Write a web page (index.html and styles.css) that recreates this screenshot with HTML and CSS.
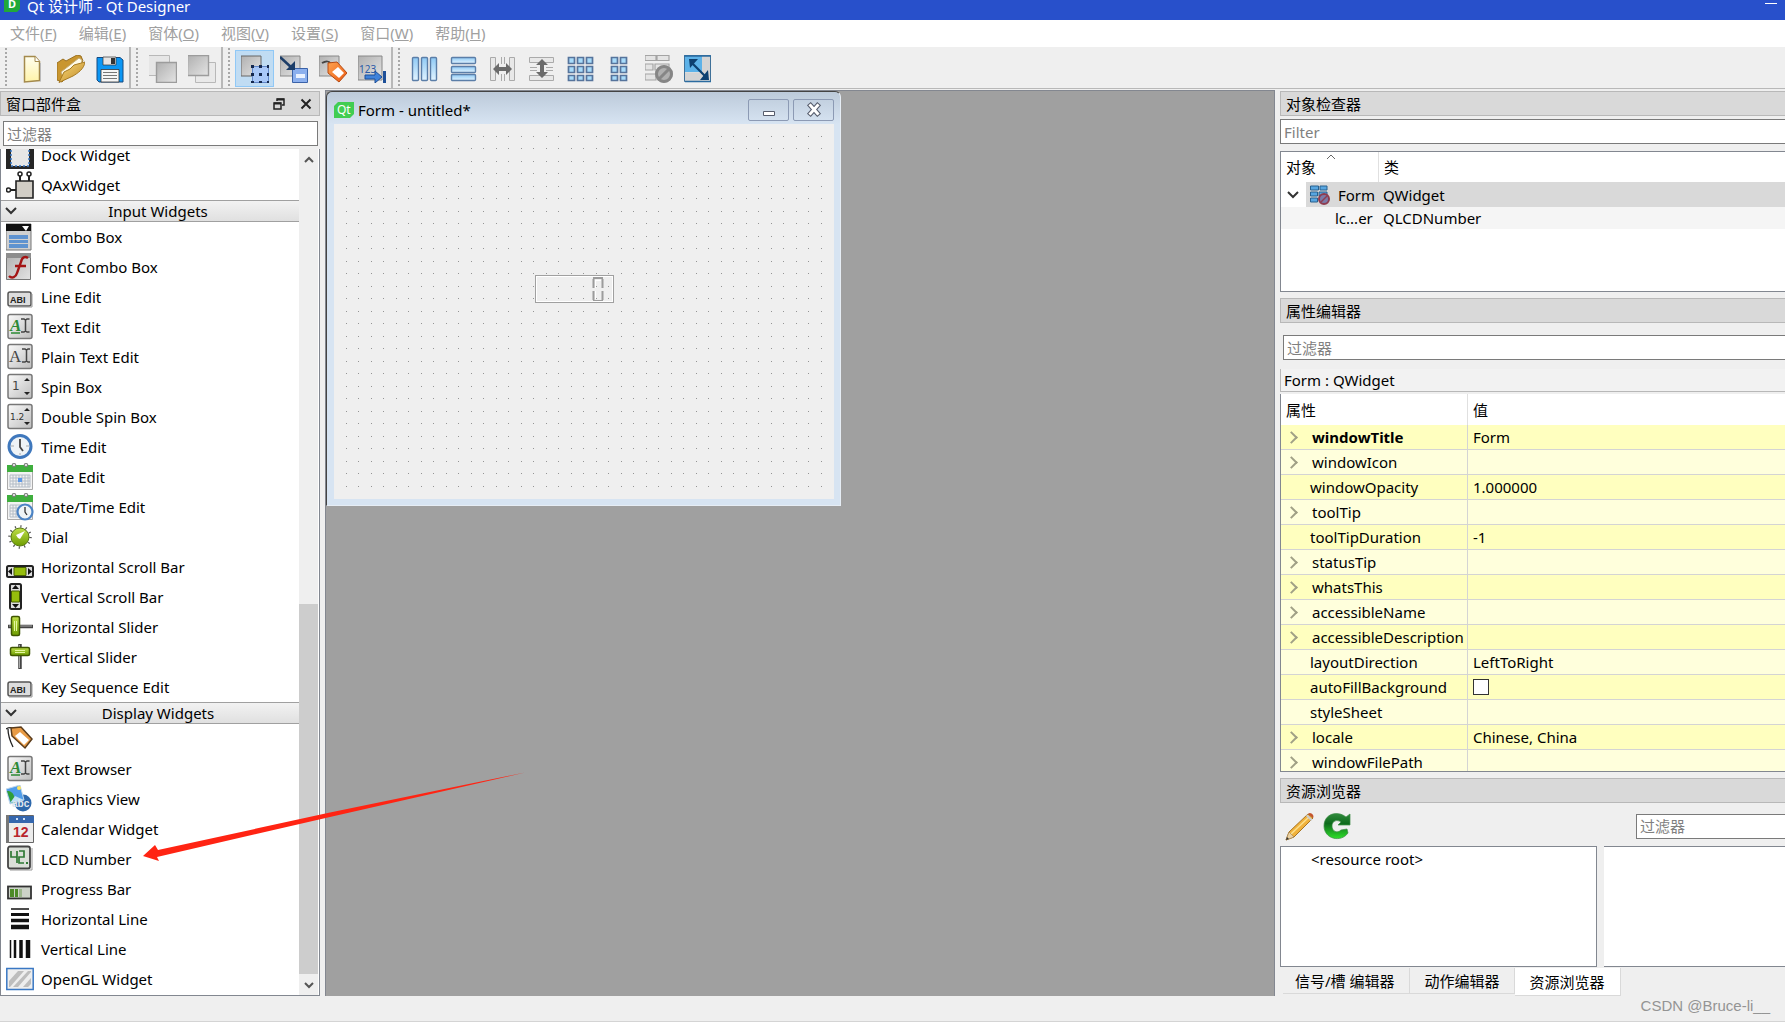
FILE: index.html
```html
<!DOCTYPE html>
<html lang="zh-CN">
<head>
<meta charset="utf-8">
<title>Qt 设计师 - Qt Designer</title>
<link rel="stylesheet" href="styles.css">
</head>
<body>
<svg class="defs" aria-hidden="true">
  <defs>
    <linearGradient id="g-grey" x1="0" y1="0" x2="1" y2="1"><stop offset="0" stop-color="#fafafa"/><stop offset="1" stop-color="#bdbdbd"/></linearGradient>
    <linearGradient id="g-dark" x1="0" y1="0" x2="1" y2="1"><stop offset="0" stop-color="#b0b0b0"/><stop offset="1" stop-color="#e4e4e4"/></linearGradient>
    <linearGradient id="g-blue" x1="0" y1="0" x2="0" y2="1"><stop offset="0" stop-color="#8fcaf5"/><stop offset="1" stop-color="#e2f4ff"/></linearGradient>
    <linearGradient id="g-folder" x1="0" y1="0" x2="1" y2="1"><stop offset="0" stop-color="#f8d878"/><stop offset="1" stop-color="#c08a28"/></linearGradient>
    <linearGradient id="g-page" x1="0" y1="0" x2="0" y2="1"><stop offset="0" stop-color="#fffef0"/><stop offset="1" stop-color="#fff3a8"/></linearGradient>
    <linearGradient id="g-green" x1="0" y1="0" x2="0" y2="1"><stop offset="0" stop-color="#2f8a3c"/><stop offset=".4" stop-color="#0e6b1c"/><stop offset="1" stop-color="#2ee02a"/></linearGradient>
    <linearGradient id="g-lime" x1="0" y1="0" x2="0" y2="1"><stop offset="0" stop-color="#c0e04a"/><stop offset="1" stop-color="#6d9c00"/></linearGradient>
    <linearGradient id="g-orange" x1="0" y1="0" x2="1" y2="1"><stop offset="0" stop-color="#ffa24e"/><stop offset="1" stop-color="#ea5a14"/></linearGradient>
    <pattern id="grid-dots" width="25" height="25" patternUnits="userSpaceOnUse"><path d="M12 12h1v1h-1zM24 12h1v1h-1zM12 24h1v1h-1zM24 24h1v1h-1z" fill="#949494"/></pattern>

    <symbol id="i-new" viewBox="0 0 28 28"><path d="M6.500 1.500H17L21.500 6.500V25.500L6.500 27z" fill="url(#g-page)" stroke="#a48a4c" stroke-width="1.500"/><path d="M17 1.500V6.500H21.500" fill="#fff" stroke="#a48a4c"/><path d="M22.500 8V26.500" stroke="#b9b9b9"/></symbol>
    <symbol id="i-open" viewBox="0 0 28 28"><path d="M0 8L6 4 9 6 20 0 24 1 26 6 5 27 0 25z" fill="#c9962f" stroke="#9a7020"/><path d="M4 17L22 3 25 5 24 12 6 22z" fill="#fffbe9" stroke="#c4ac74"/><path d="M2 27.500L7 17 13 14 17 10 28 7C27 14 21 18 16 21z" fill="url(#g-folder)" stroke="#a67a22"/></symbol>
    <symbol id="i-save" viewBox="0 0 28 28"><path d="M1 2.500H24L27 5V27H3L1 25z" fill="#0a96f4" stroke="#174a80"/><path d="M7 2h13v8H7z" fill="#e4e4e4" stroke="#333" stroke-width=".7"/><path d="M15 3h4v6h-4z" fill="#333"/><path d="M5 14.500h18V27H5z" fill="#f6f6f6" stroke="#333" stroke-width=".8"/><path d="M7 17.500h14M7 20.500h14M7 23.500h14" stroke="#777" stroke-width="1.200"/></symbol>
    <symbol id="i-front" viewBox="0 0 28 28"><path d="M-.5.500h21v20h-21z" fill="#e6e6e6" stroke="#b8b8b8"/><path d="M7.500 7.500h20v20h-20z" fill="url(#g-dark)" stroke="#9c9c9c" stroke-width="1.400"/></symbol>
    <symbol id="i-back" viewBox="0 0 28 28"><path d="M7.500 7.500h20v20h-20z" fill="#e9e9e9" stroke="#b8b8b8"/><path d="M-.5.500h21v20h-21z" fill="url(#g-dark)" stroke="#9c9c9c" stroke-width="1.400"/></symbol>
    <symbol id="i-widgets" viewBox="0 0 28 28"><path d="M0 1h20v20H0z" fill="url(#g-dark)" stroke="#666"/><path d="M11.500 11.500h16v16h-16z" fill="#a9c8f8" stroke="#6287c9"/><path d="M10 10h3v3h-3zM18 10h3v3h-3zM26 10h3v3h-3zM10 18h3v3h-3zM18 18h3v3h-3zM26 18h3v3h-3zM10 26h3v3h-3zM18 26h3v3h-3zM26 26h3v3h-3z" fill="#14284e"/></symbol>
    <symbol id="i-signals" viewBox="0 0 28 28"><path d="M0 1h20v20H0z" fill="url(#g-dark)" stroke="#888"/><path d="M12.500 13.500h15v14h-15z" fill="#8cb0ee" stroke="#3a62a8"/><path d="M16 19h9v4h-9z" fill="#eaf2ff"/><path d="M0 2L12 13" stroke="#1c3d68" stroke-width="2.500"/><path d="M15 6V15H6z" fill="#1c3d68"/></symbol>
    <symbol id="i-buddy" viewBox="0 0 28 28"><path d="M0 1h20v20H0z" fill="url(#g-dark)" stroke="#888"/><path d="M3 8C8 5 10 6 12 9" stroke="#444" stroke-width="2" fill="none"/><path d="M9 8L18 7 28 18 20 27 9 18z" fill="url(#g-orange)" stroke="#b64a12"/><path d="M19 12L25 18 20 23 13 17z" fill="#fff"/></symbol>
    <symbol id="i-tab" viewBox="0 0 28 28"><path d="M0 1h24v24H0z" fill="url(#g-dark)" stroke="#888"/><text x="1" y="18" class="tiny-num">123</text><path d="M7 20h10v-4l7 6-7 6v-4H7z" fill="#3f82da" stroke="#1d4f98"/><path d="M26.500 16v12" stroke="#1d4f98" stroke-width="3"/></symbol>
    <symbol id="i-hlay" viewBox="0 0 28 28"><g fill="url(#g-blue)" stroke="#5b7ea8" stroke-width="1.400"><rect x="1.500" y="2.500" width="6" height="23" rx="1"/><rect x="10.500" y="2.500" width="6" height="23" rx="1"/><rect x="19.500" y="2.500" width="6" height="23" rx="1"/></g></symbol>
    <symbol id="i-vlay" viewBox="0 0 28 28"><g fill="url(#g-blue)" stroke="#5b7ea8" stroke-width="1.400"><rect x="1.500" y="2.500" width="24" height="6" rx="1"/><rect x="1.500" y="11.500" width="24" height="6" rx="1"/><rect x="1.500" y="19.500" width="24" height="6" rx="1"/></g></symbol>
    <symbol id="i-hsplit" viewBox="0 0 28 28"><g fill="#e8e8e8" stroke="#aaa"><path d="M1.500 2.500h5v23h-5zM20.500 2.500h5v23h-5zM12.500 2v7M15.500 2v7M12.500 19v7M15.500 19v7"/></g><path d="M4 14l6-6v4h7V8l6 6-6 6v-4h-7v4z" fill="#6b6b6b"/></symbol>
    <symbol id="i-vsplit" viewBox="0 0 28 28"><g fill="#e8e8e8" stroke="#aaa"><path d="M1.500 2.500h24v5h-24zM1.500 20.500h24v5h-24zM2 12.500h7M2 15.500h7M18 12.500h7M18 15.500h7"/></g><path d="M14 4l6 6h-4v7h4l-6 6-6-6h4v-7H8z" fill="#6b6b6b"/></symbol>
    <symbol id="i-grid" viewBox="0 0 28 28"><g fill="#a8dbfa" stroke="#56749c" stroke-width="1.700"><path d="M1.500 2.500h6v6h-6zM10.500 2.500h6v6h-6zM19.500 2.500h6v6h-6zM1.500 11.500h6v6h-6zM10.500 11.500h6v6h-6zM19.500 11.500h6v6h-6zM1.500 20.500h6v5h-6zM10.500 20.500h6v5h-6zM19.500 20.500h6v5h-6z"/></g></symbol>
    <symbol id="i-form" viewBox="0 0 28 28"><g fill="#a8dbfa" stroke="#56749c" stroke-width="1.700"><path d="M5.500 2.500h6v6h-6zM14.500 2.500h6v6h-6zM5.500 11.500h6v6h-6zM14.500 11.500h6v6h-6zM5.500 20.500h6v5h-6zM14.500 20.500h6v5h-6z"/></g></symbol>
    <symbol id="i-break" viewBox="0 0 28 28"><g fill="#e4e4e4" stroke="#a4a4a4" stroke-width="1.200"><path d="M0 .5h11v5H0zM12 .5h12v5H12zM0 9h8v6H0zM10 9h14v6H10zM0 19h11v6H0z"/></g><circle cx="19" cy="19" r="9" fill="#b0b0b0"/><circle cx="19" cy="19" r="7.500" fill="none" stroke="#868686" stroke-width="3"/><path d="M14 24L24 14" stroke="#868686" stroke-width="3"/></symbol>
    <symbol id="i-adjust" viewBox="0 0 28 28"><path d="M.5.500h26v26H.5z" fill="#dcdcdc" stroke="#3f7199"/><path d="M1 1h17v16H1z" fill="#5db2e8"/><path d="M18 1h8v20h-8zM1 18h17v8H1z" fill="#d4d4d4"/><path d="M8 8L21 21" stroke="#0d4070" stroke-width="2.200"/><path d="M5 4h9l-8 9zM25 25h-9l8-10z" fill="#0d4070"/><path d="M0 1h27M1 26.500h26" stroke="#2b6ba0" stroke-width="1.500"/></symbol>

    <symbol id="w-dock" viewBox="0 0 28 28"><path d="M0 0h28v28H0z" fill="#262626"/><path d="M5 3h18v22H5z" fill="#e6e6e6" stroke="#3a78c4" stroke-width="1.500" stroke-dasharray="2 2"/></symbol>
    <symbol id="w-ax" viewBox="0 0 28 28"><path d="M14 5v6M23 5v6M4 19h6" stroke="#222" stroke-width="2"/><g fill="#fff" stroke="#222" stroke-width="1.500"><circle cx="14" cy="3" r="2"/><circle cx="23" cy="3" r="2"/><circle cx="2.500" cy="19" r="2"/></g><path d="M10 10h17v17H10z" fill="#d1cdc5" stroke="#222" stroke-width="1.600"/></symbol>
    <symbol id="w-combo" viewBox="0 0 28 28"><path d="M0 1h25v26H0z" fill="#d0d0d0" stroke="#777"/><path d="M0 1h25v7H0z" fill="#111"/><path d="M16 3h7l-3 5z" fill="#fff"/><path d="M3 12h19v4H3zM3 17h19v3H3zM3 21h19v4H3z" fill="#5f93d0"/></symbol>
    <symbol id="w-font" viewBox="0 0 28 28"><path d="M.5.500h24v26H.5z" fill="url(#g-dark)" stroke="#777"/><path d="M0 0h25v5H0z" fill="#8d8d8d"/><path d="M22 5C19 3 16 4 15 9L11 20C10 24 6 26 3 23M9 13H20" fill="none" stroke="#a31515" stroke-width="2.400"/></symbol>
    <symbol id="w-line" viewBox="0 0 28 28"><rect x="2" y="9" width="23" height="14" rx="2" fill="#ddd" stroke="#555" stroke-width="1.500"/><path d="M3 24h23V11" fill="none" stroke="#999"/><text x="4" y="20" class="tiny-abi">ABI</text></symbol>
    <symbol id="w-text" viewBox="0 0 28 28"><rect x="2" y="1.500" width="24" height="24" rx="2" fill="url(#g-grey)" stroke="#777" stroke-width="1.500"/><text x="4" y="18" class="rich-a">A</text><path d="M5 20h9" stroke="#2d8a35" stroke-width="1.500"/><path d="M15 6h3l1.500 1L21 6h2.500M15 19h3l1.500-1 1.500 1h2.500M19.500 7v11" fill="none" stroke="#444" stroke-width="1.500"/></symbol>
    <symbol id="w-plain" viewBox="0 0 28 28"><rect x="2" y="1.500" width="24" height="24" rx="2" fill="url(#g-grey)" stroke="#777" stroke-width="1.500"/><text x="3" y="19" class="plain-a">A</text><path d="M16 6h3l1.500 1L22 6h2M16 19h3l1.500-1 1.500 1h2M20.500 7v11" fill="none" stroke="#444" stroke-width="1.500"/></symbol>
    <symbol id="w-spin" viewBox="0 0 28 28"><rect x="2" y="1.500" width="24" height="24" rx="2" fill="url(#g-grey)" stroke="#777" stroke-width="1.500"/><text x="6" y="17" class="spin-num">1</text><path d="M18 8l3-3 3 3zM18 19l3 3 3-3z" fill="#222"/></symbol>
    <symbol id="w-dspin" viewBox="0 0 28 28"><rect x="2" y="1.500" width="24" height="24" rx="2" fill="url(#g-grey)" stroke="#777" stroke-width="1.500"/><text x="4" y="17" class="dspin-num">1.2</text><path d="M18 8l3-3 3 3zM18 19l3 3 3-3z" fill="#222"/></symbol>
    <symbol id="w-time" viewBox="0 0 28 28"><circle cx="14" cy="13.500" r="11" fill="#eef3f6" stroke="#3f78bd" stroke-width="3"/><path d="M14 6v8l3 4" fill="none" stroke="#444" stroke-width="1.800"/><path d="M5 13h3M20 13h3M14 20v2" stroke="#aaa"/></symbol>
    <symbol id="w-date" viewBox="0 0 28 28"><path d="M1.500 2.500h25v24h-25z" fill="#f3f3f3" stroke="#aaa"/><path d="M1 2h26v7H1z" fill="#3fae3d"/><path d="M4 12h20v12H4zM4 15h20M4 18h20M4 21h20M7 12v12M10 12v12M13 12v12M16 12v12M19 12v12M22 12v12" fill="none" stroke="#b3bcc6"/><path d="M12 15h4v4h-4z" fill="#5b97e8"/><circle cx="8" cy="2" r="1.800" fill="#ddd" stroke="#777"/><circle cx="20" cy="2" r="1.800" fill="#ddd" stroke="#777"/></symbol>
    <symbol id="w-datetime" viewBox="0 0 28 28"><path d="M1.500 2.500h25v24h-25z" fill="#f3f3f3" stroke="#aaa"/><path d="M1 2h26v7H1z" fill="#3fae3d"/><path d="M4 12h20M4 15h20M4 18h20M4 21h20M4 24h20M4 12v12M7 12v12M10 12v12" fill="none" stroke="#b3bcc6"/><circle cx="8" cy="2" r="1.800" fill="#ddd" stroke="#777"/><circle cx="20" cy="2" r="1.800" fill="#ddd" stroke="#777"/><circle cx="19" cy="19" r="7.500" fill="#eef3f6" stroke="#4b83c4" stroke-width="2.200"/><path d="M19 14v5l2 3" fill="none" stroke="#333" stroke-width="1.300"/></symbol>
    <symbol id="w-dial" viewBox="0 0 28 28"><circle cx="14" cy="14" r="10.500" fill="none" stroke="#555" stroke-width="2.500" stroke-dasharray="1.200 4.300"/><circle cx="14" cy="14" r="9" fill="url(#g-lime)" stroke="#587a10"/><path d="M19 8L10 12l2 3 2 1z" fill="#fff"/></symbol>
    <symbol id="w-hscroll" viewBox="0 0 28 28"><rect x="1" y="13" width="26" height="11" rx="1.500" fill="#ddd" stroke="#222" stroke-width="2"/><path d="M8 14.500h12v8H8z" fill="#96bd0c" stroke="#486000"/><path d="M6 15v7l-4-3.500zM22 15v7l4-3.500z" fill="#111"/></symbol>
    <symbol id="w-vscroll" viewBox="0 0 28 28"><rect x="4" y="1" width="11" height="25" rx="1.500" fill="#ddd" stroke="#222" stroke-width="2"/><path d="M5.500 8h8v11h-8z" fill="#96bd0c" stroke="#486000"/><path d="M6 6h7L9.500 2zM6 21h7l-3.500 4z" fill="#111"/></symbol>
    <symbol id="w-hslider" viewBox="0 0 28 28"><path d="M2 13.500h25" stroke="#444" stroke-width="3.500"/><path d="M3 13h23" stroke="#aaa"/><rect x="5.500" y="3.500" width="8" height="19" rx="1.500" fill="url(#g-lime)" stroke="#3f5600" stroke-width="1.500"/><path d="M8.500 8v10M10.500 8v10" stroke="#e5f7a0"/></symbol>
    <symbol id="w-vslider" viewBox="0 0 28 28"><path d="M14 1v25" stroke="#444" stroke-width="3.500"/><path d="M13.500 2v23" stroke="#aaa"/><rect x="4.500" y="4.500" width="19" height="8" rx="1.500" fill="url(#g-lime)" stroke="#3f5600" stroke-width="1.500"/><path d="M9 7.500h10M9 9.500h10" stroke="#e5f7a0"/></symbol>
    <symbol id="w-label" viewBox="0 0 28 28"><path d="M0 4C4 1 8 3 11 5M2 4C2 12 5 18 7 22" stroke="#222" stroke-width="1.300" fill="none"/><path d="M5 3L15 2 26 14 19 23 6 11z" fill="#e89b45" stroke="#5a3c1c" stroke-width="1.500"/><path d="M14 7L23 15 18 20 9 11z" fill="#fff"/></symbol>
    <symbol id="w-graphics" viewBox="0 0 28 28"><circle cx="17" cy="18" r="8.500" fill="#2d68ac"/><path d="M0 4L14 0 18 15 4 19z" fill="#4e9cea" stroke="#c4d8e8"/><path d="M1 6c4 0 6 2 7 5l2 6-5 1z" fill="#2f9e3a"/><path d="M4 18l5-7 9 4z" fill="#bde0f8"/><circle cx="13" cy="3" r="2" fill="#ffe35a"/><text x="6" y="22" class="gfx-abc">abc</text></symbol>
    <symbol id="w-calendar" viewBox="0 0 28 28"><path d="M.5.500h27v27H.5z" fill="#ececec" stroke="#666"/><path d="M0 0h3v28H0z" fill="#777"/><path d="M3 1h25v7H3z" fill="#3567ae"/><text x="7" y="22" class="cal-num">12</text><path d="M10 4h2M17 4h2" stroke="#cfe0f8" stroke-width="2"/></symbol>
    <symbol id="w-lcd" viewBox="0 0 28 28"><rect x="2" y="1.500" width="22" height="22" rx="2" fill="#dadfd8" stroke="#444" stroke-width="1.800"/><path d="M26 3v22H4" fill="none" stroke="#999"/><path d="M5 6v6h6M11 6v12M13 6h5v6h-5v6h5" fill="none" stroke="#2e7a34" stroke-width="1.700"/><path d="M20 17h2v2h-2z" fill="#2e7a34"/></symbol>
    <symbol id="w-progress" viewBox="0 0 28 28"><rect x="2" y="11.500" width="23" height="12" fill="#ccd2c8" stroke="#333" stroke-width="1.800"/><path d="M4 14h4v8H4zM9 14h3v8H9z" fill="#4d8a28"/><path d="M13 14h3v8h-3z" fill="#9cb78c"/></symbol>
    <symbol id="w-hline" viewBox="0 0 28 28"><path d="M5 4h18" stroke="#111" stroke-width="1.500"/><path d="M5 9.500h18" stroke="#111" stroke-width="3"/><path d="M5 15.500h18" stroke="#111" stroke-width="3.500"/><path d="M5 22h18" stroke="#111" stroke-width="4.500"/></symbol>
    <symbol id="w-vline" viewBox="0 0 28 28"><path d="M4.500 5v18" stroke="#111" stroke-width="1.500"/><path d="M9 5v18" stroke="#111" stroke-width="2.500"/><path d="M15 5v18" stroke="#111" stroke-width="3.500"/><path d="M22 5v18" stroke="#111" stroke-width="4.500"/></symbol>
    <symbol id="w-opengl" viewBox="0 0 28 28"><path d="M.8 3.500h26.400v21H.8z" fill="#eee" stroke="#3a78c4" stroke-width="1.500"/><path d="M3 16L12 6h6L4 22H3zM7 22L22 6h3v1L12 22zM17 22l8-9v6l-3 3z" fill="#bdbdbd"/></symbol>
    <symbol id="i-nolayout" viewBox="0 0 20 20"><path d="M.5 1h8v4h-8zM10 1h7v4h-7zM.5 7h7v4h-7zM9 7h8v4H9zM.5 13h7v4h-7z" fill="#58a6e0" stroke="#28608e"/><circle cx="14" cy="14" r="5" fill="#7a7aa8" stroke="#8e3c50" stroke-width="2"/><path d="M11 17l6-6" stroke="#8e3c50" stroke-width="1.500"/></symbol>
  </defs>
</svg>

<header class="titlebar">
  <svg class="app-logo" viewBox="0 0 16 16"><path d="M3 0h13v13l-3 3H0V3z" fill="#21a838"/><text x="4" y="12" class="logo-d">D</text></svg>
  <h1 class="app-title">Qt 设计师 - Qt Designer</h1>
  <button class="window-min" aria-label="Minimize"></button>
</header>

<nav class="menubar">
  <button>文件(<u>F</u>)</button>
  <button>编辑(<u>E</u>)</button>
  <button>窗体(<u>O</u>)</button>
  <button>视图(<u>V</u>)</button>
  <button>设置(<u>S</u>)</button>
  <button>窗口(<u>W</u>)</button>
  <button>帮助(<u>H</u>)</button>
</nav>

<div class="toolbar">
  <div class="tool-group">
    <button aria-label="New"><svg><use href="#i-new"/></svg></button>
    <button aria-label="Open"><svg><use href="#i-open"/></svg></button>
    <button aria-label="Save"><svg><use href="#i-save"/></svg></button>
  </div>
  <div class="tool-group">
    <button aria-label="Bring to front"><svg><use href="#i-front"/></svg></button>
    <button aria-label="Send to back"><svg><use href="#i-back"/></svg></button>
  </div>
  <div class="tool-group">
    <button class="active" aria-label="Edit widgets"><svg><use href="#i-widgets"/></svg></button>
    <button aria-label="Edit signals"><svg><use href="#i-signals"/></svg></button>
    <button aria-label="Edit buddies"><svg><use href="#i-buddy"/></svg></button>
    <button aria-label="Edit tab order"><svg><use href="#i-tab"/></svg></button>
  </div>
  <div class="tool-group">
    <button aria-label="Lay out horizontally"><svg><use href="#i-hlay"/></svg></button>
    <button aria-label="Lay out vertically"><svg><use href="#i-vlay"/></svg></button>
    <button aria-label="Horizontal splitter"><svg><use href="#i-hsplit"/></svg></button>
    <button aria-label="Vertical splitter"><svg><use href="#i-vsplit"/></svg></button>
    <button aria-label="Grid layout"><svg><use href="#i-grid"/></svg></button>
    <button aria-label="Form layout"><svg><use href="#i-form"/></svg></button>
    <button aria-label="Break layout"><svg><use href="#i-break"/></svg></button>
    <button aria-label="Adjust size"><svg><use href="#i-adjust"/></svg></button>
  </div>
</div>

<main class="workspace">
  <section class="dock widget-box">
    <h2 class="dock-title">窗口部件盒
      <span class="dock-buttons">
        <button aria-label="Float"><svg viewBox="0 0 12 12"><path d="M4 3V1h7v6H9" fill="none" stroke="#222" stroke-width="1.500"/><path d="M4 1.500h7" stroke="#222" stroke-width="2"/><path d="M1 5h7v6H1z" fill="none" stroke="#222" stroke-width="1.500"/><path d="M1 5.500h7" stroke="#222" stroke-width="2"/></svg></button>
        <button aria-label="Close"><svg viewBox="0 0 12 12"><path d="M1.500 1.500l9 9M10.500 1.500l-9 9" stroke="#222" stroke-width="2"/></svg></button>
      </span>
    </h2>
    <input class="field box-filter" type="text" placeholder="过滤器" aria-label="过滤器">
    <div class="widget-frame">
      <ul class="widget-list">
        <li class="widget"><svg><use href="#w-dock"/></svg>Dock Widget</li>
        <li class="widget"><svg><use href="#w-ax"/></svg>QAxWidget</li>
        <li class="category"><svg viewBox="0 0 12 12"><path d="M1 3l5 5 5-5" fill="none" stroke="#333" stroke-width="2"/></svg><span>Input Widgets</span></li>
        <li class="widget"><svg><use href="#w-combo"/></svg>Combo Box</li>
        <li class="widget"><svg><use href="#w-font"/></svg>Font Combo Box</li>
        <li class="widget"><svg><use href="#w-line"/></svg>Line Edit</li>
        <li class="widget"><svg><use href="#w-text"/></svg>Text Edit</li>
        <li class="widget"><svg><use href="#w-plain"/></svg>Plain Text Edit</li>
        <li class="widget"><svg><use href="#w-spin"/></svg>Spin Box</li>
        <li class="widget"><svg><use href="#w-dspin"/></svg>Double Spin Box</li>
        <li class="widget"><svg><use href="#w-time"/></svg>Time Edit</li>
        <li class="widget"><svg><use href="#w-date"/></svg>Date Edit</li>
        <li class="widget"><svg><use href="#w-datetime"/></svg>Date/Time Edit</li>
        <li class="widget"><svg><use href="#w-dial"/></svg>Dial</li>
        <li class="widget"><svg><use href="#w-hscroll"/></svg>Horizontal Scroll Bar</li>
        <li class="widget"><svg><use href="#w-vscroll"/></svg>Vertical Scroll Bar</li>
        <li class="widget"><svg><use href="#w-hslider"/></svg>Horizontal Slider</li>
        <li class="widget"><svg><use href="#w-vslider"/></svg>Vertical Slider</li>
        <li class="widget"><svg><use href="#w-line"/></svg>Key Sequence Edit</li>
        <li class="category"><svg viewBox="0 0 12 12"><path d="M1 3l5 5 5-5" fill="none" stroke="#333" stroke-width="2"/></svg><span>Display Widgets</span></li>
        <li class="widget"><svg><use href="#w-label"/></svg>Label</li>
        <li class="widget"><svg><use href="#w-text"/></svg>Text Browser</li>
        <li class="widget"><svg><use href="#w-graphics"/></svg>Graphics View</li>
        <li class="widget"><svg><use href="#w-calendar"/></svg>Calendar Widget</li>
        <li class="widget"><svg><use href="#w-lcd"/></svg>LCD Number</li>
        <li class="widget"><svg><use href="#w-progress"/></svg>Progress Bar</li>
        <li class="widget"><svg><use href="#w-hline"/></svg>Horizontal Line</li>
        <li class="widget"><svg><use href="#w-vline"/></svg>Vertical Line</li>
        <li class="widget"><svg><use href="#w-opengl"/></svg>OpenGL Widget</li>
      </ul>
      <div class="scrollbar">
        <button aria-label="Scroll up"><svg viewBox="0 0 12 12"><path d="M2 8l4-4 4 4" fill="none" stroke="#555" stroke-width="2"/></svg></button>
        <div class="track"><div class="thumb"></div></div>
        <button aria-label="Scroll down"><svg viewBox="0 0 12 12"><path d="M2 4l4 4 4-4" fill="none" stroke="#555" stroke-width="2"/></svg></button>
      </div>
    </div>
  </section>

  <section class="canvas">
    <div class="form-window">
      <div class="form-title">
        <svg class="qt-logo" viewBox="0 0 20 16"><path d="M4 0h16v12l-4 4H0V4z" fill="#41cd52"/><text x="3" y="12" class="logo-qt">Qt</text></svg>
        <span class="form-name">Form - untitled*</span>
        <button aria-label="Minimize form"><svg viewBox="0 0 16 16"><path d="M2.500 9.500h11v4h-11z" fill="#fff" stroke="#555b6b"/></svg></button>
        <button aria-label="Close form"><svg viewBox="0 0 16 16"><path d="M4.500 3.500l7 8M11.500 3.500l-7 8" stroke="#555b6b" stroke-width="5" stroke-linecap="square"/><path d="M4.500 3.500l7 8M11.500 3.500l-7 8" stroke="#fff" stroke-width="3" stroke-linecap="square"/></svg></button>
      </div>
      <div class="form-body">
        <svg class="dots"><rect width="498" height="373" fill="url(#grid-dots)"/></svg>
        <div class="lcd"><svg viewBox="0 0 12 25"><path d="M1 1h10M1 24h10M1.500 2v9M10.500 2v9M1.500 14v9M10.500 14v9" stroke="#9c9c9c" stroke-width="2"/><path d="M3 3.500h6M3.500 3v8M3.500 14v8" stroke="#fff" fill="none"/></svg></div>
      </div>
    </div>
  </section>

  <aside class="side">
    <section class="dock">
      <h2 class="dock-title">对象检查器</h2>
      <input class="field object-filter" type="text" placeholder="Filter" aria-label="Filter">
      <div class="tree">
        <table>
          <thead><tr><th class="sorted">对象<svg viewBox="0 0 10 6"><path d="M1 5l4-4 4 4" fill="none" stroke="#666"/></svg></th><th>类</th></tr></thead>
          <tbody>
            <tr class="selected"><td><div class="node"><svg class="chevron" viewBox="0 0 12 12"><path d="M1 3l5 5 5-5" fill="none" stroke="#333" stroke-width="2"/></svg><span class="node-name"><svg class="node-icon"><use href="#i-nolayout"/></svg>Form</span></div></td><td>QWidget</td></tr>
            <tr class="child"><td>lc...er</td><td>QLCDNumber</td></tr>
          </tbody>
        </table>
      </div>
    </section>

    <section class="dock properties">
      <h2 class="dock-title">属性编辑器</h2>
      <input class="field property-filter" type="text" placeholder="过滤器" aria-label="过滤器">
      <p class="current-object">Form : QWidget</p>
      <div class="property-frame">
        <table>
          <thead><tr><th>属性</th><th>值</th></tr></thead>
          <tbody>
            <tr class="more changed"><td>windowTitle</td><td>Form</td></tr>
            <tr class="more"><td>windowIcon</td><td></td></tr>
            <tr><td>windowOpacity</td><td>1.000000</td></tr>
            <tr class="more"><td>toolTip</td><td></td></tr>
            <tr><td>toolTipDuration</td><td>-1</td></tr>
            <tr class="more"><td>statusTip</td><td></td></tr>
            <tr class="more"><td>whatsThis</td><td></td></tr>
            <tr class="more"><td>accessibleName</td><td></td></tr>
            <tr class="more"><td>accessibleDescription</td><td></td></tr>
            <tr><td>layoutDirection</td><td>LeftToRight</td></tr>
            <tr><td><label for="autofill">autoFillBackground</label></td><td><input id="autofill" type="checkbox"></td></tr>
            <tr><td>styleSheet</td><td></td></tr>
            <tr class="more"><td>locale</td><td>Chinese, China</td></tr>
            <tr class="more"><td>windowFilePath</td><td></td></tr>
          </tbody>
        </table>
      </div>
    </section>

    <section class="dock">
      <h2 class="dock-title">资源浏览器</h2>
      <div class="resource-tools">
        <button aria-label="Edit resources"><svg viewBox="0 0 28 28"><path d="M0 28L3 20 22 2 27 6 8 25z" fill="#f0b23c" stroke="#a87420"/><path d="M5 22L23 5" stroke="#fbe08e" stroke-width="1.500"/><path d="M0 28L3 20 8 25z" fill="#ead2a4" stroke="#a08050" stroke-width=".6"/><path d="M0 28l1-3 2 2z" fill="#333"/><path d="M20 4l5 5 1.500-1.500-5-5z" fill="#ccc"/><path d="M22 2C24-1 29 3 27 6z" fill="#c4552d"/></svg></button>
        <button aria-label="Reload"><svg viewBox="0 0 28 28"><path d="M27 13V2l-4 3C14-2 1 2 1 14c0 13 17 17 24 7l-1-4-6 1c-4 4-9 1-9-4 0-5 5-7 9-4l-3 3z" fill="url(#g-green)" stroke="#3c8b45" stroke-width=".7"/></svg></button>
        <input class="field resource-filter" type="text" placeholder="过滤器" aria-label="过滤器">
      </div>
      <div class="resource-panes">
        <div class="pane root-pane">&lt;resource root&gt;</div>
        <div class="pane"></div>
      </div>
      <div class="tabs" role="tablist">
        <button role="tab">信号/槽 编辑器</button>
        <button role="tab">动作编辑器</button>
        <button role="tab" class="current" aria-selected="true">资源浏览器</button>
      </div>
    </section>
  </aside>
</main>

<footer class="statusbar"><span>CSDN @Bruce-li__</span></footer>

<svg class="annotation" viewBox="0 0 384 90" aria-hidden="true"><path d="M0 84L12 73 15 78 187 40.500 382 .5 187 45 14 85 16 89z" fill="#ff2413"/></svg>
</body>
</html>
```

FILE: styles.css
```css
* {
  box-sizing: border-box;
}

body {
  margin: 0;
  height: 100vh;
  display: flex;
  flex-direction: column;
  position: relative;
  overflow: hidden;
  background: #efefef;
  color: #000;
  font: 15px/20px "Noto Sans", "Noto Sans CJK SC", sans-serif;
}

button,
input {
  font: inherit;
  color: inherit;
}

button {
  display: flex;
  align-items: center;
  justify-content: center;
  padding: 0;
  border: 0;
  background: none;
}

h1,
h2,
p,
ul {
  margin: 0;
  padding: 0;
  font-size: inherit;
  font-weight: normal;
}

svg {
  flex: none;
  display: block;
  overflow: visible;
}

.defs {
  position: absolute;
  width: 0;
  height: 0;
}

.tiny-num { font: 10px "Noto Sans", sans-serif; fill: #2a5aa6; }
.tiny-abi { font: bold 9px "Liberation Sans", sans-serif; fill: #222; }
.rich-a { font: italic bold 17px "Liberation Serif", serif; fill: #2d8a35; }
.plain-a { font: 17px "Liberation Serif", serif; fill: #444; }
.spin-num { font: 12px "DejaVu Sans", sans-serif; fill: #444; }
.dspin-num { font: 9px "DejaVu Sans", sans-serif; fill: #333; }
.gfx-abc { font: bold 10px "Liberation Sans", sans-serif; fill: #e0e6ee; }
.cal-num { font: bold 14px "Liberation Sans", sans-serif; fill: #b8252c; }
.logo-d { font: bold 11px "Noto Sans", sans-serif; fill: #fff; }
.logo-qt { font: 12px "Noto Sans", sans-serif; fill: #fff; }

/* Title, menu and tool bars */
.titlebar {
  flex: none;
  display: flex;
  align-items: flex-end;
  gap: 7px;
  height: 20px;
  padding: 0 4px 4px;
  background: #2850cb;
  color: #fff;
}

.app-logo {
  width: 16px;
  height: 16px;
  margin-bottom: 4px;
}

.window-min {
  width: 12px;
  height: 1px;
  margin: 0 4px 12px auto;
  background: #fff;
}

.menubar {
  flex: none;
  display: flex;
  gap: 22px;
  height: 27px;
  padding: 0 10px;
  background: #fff;
  color: #a0a0a0;
}

.menubar button {
  height: 25px;
}

.toolbar {
  flex: none;
  display: flex;
  height: 42px;
  border-bottom: 1px solid #b8b8b8;
}

.tool-group {
  display: flex;
  align-items: center;
  padding: 2px 0 0 12px;
  border-right: 2px solid #b8b8b8;
  background: radial-gradient(circle, #a8a8a8 1px, transparent 1px) 4px 4px / 4px 4px repeat-y;
}

.tool-group:last-child {
  flex: 1;
  border-right: 0;
}

.tool-group button {
  width: 39px;
  height: 37px;
}

.tool-group button.active {
  background: #c0dcf3;
  border: 1px solid #90c8f6;
}

.tool-group svg {
  width: 28px;
  height: 28px;
}

/* Docks */
.workspace {
  flex: 1;
  min-height: 0;
  display: grid;
  grid-template-columns: 320px 1fr 505px;
  grid-template-rows: minmax(0, 1fr);
  gap: 5px;
  padding-top: 1px;
}

.dock {
  display: flex;
  flex-direction: column;
}

.dock-title {
  flex: none;
  display: flex;
  align-items: center;
  justify-content: space-between;
  height: 25px;
  padding: 0 5px;
  margin-top: 1px;
  background: #d9d9d9;
  border: 1px solid #b8b8b8;
}

.side .dock-title {
  border-right: 0;
}

.dock-buttons {
  display: flex;
  gap: 15px;
  padding-right: 2px;
}

.dock-buttons svg {
  width: 12px;
  height: 12px;
}

.field {
  flex: none;
  height: 25px;
  padding: 0 3px;
  border: 1px solid #7a7a7a;
  border-radius: 0;
  background: #fff;
}

.field::placeholder {
  color: #808080;
  opacity: 1;
}

.side .field {
  border-right: 0;
}

.box-filter {
  margin: 5px 2px 3px 3px;
}

.widget-frame {
  flex: 1;
  min-height: 0;
  display: flex;
  border: 1px solid #828790;
  border-top: 0;
  background: #fff;
}

.widget-list {
  flex: 1;
  min-height: 0;
  display: flex;
  flex-direction: column;
  justify-content: flex-end;
  padding-bottom: 1px;
  overflow: hidden;
  list-style: none;
}

.widget {
  flex: none;
  display: flex;
  align-items: center;
  gap: 7px;
  height: 30px;
  padding-left: 5px;
}

.widget svg {
  width: 28px;
  height: 28px;
}

.category {
  flex: none;
  display: flex;
  align-items: center;
  height: 22px;
  padding-left: 4px;
  background: linear-gradient(#f2f2f2, #e0e0e0);
  border-top: 1px solid #a0a0a0;
  border-bottom: 1px solid #a0a0a0;
}

.category svg {
  width: 12px;
  height: 12px;
}

.category span {
  flex: 1;
  text-align: center;
}

.scrollbar {
  width: 20px;
  display: flex;
  flex-direction: column;
  border-right: 1px solid #fff;
  background: #efefef;
}

.scrollbar button {
  height: 21px;
}

.scrollbar svg {
  width: 12px;
  height: 12px;
}

.track {
  flex: 1;
  display: flex;
  align-items: flex-end;
}

.thumb {
  width: 100%;
  height: 46%;
  background: #cdcdcd;
}

/* Form editor */
.canvas {
  position: relative;
  overflow: hidden;
  background: #a0a0a0;
  border-top: 1px solid #838790;
  border-left: 1px solid #838790;
  border-right: 1px solid #838790;
}

.form-window {
  position: absolute;
  left: 0;
  top: 0;
  padding: 0 6px 6px 7px;
  border: 1px solid #444;
  border-right-color: #e6edf5;
  border-bottom-color: #e6edf5;
  border-radius: 6px 6px 0 0;
  background: linear-gradient(#bccada, #d7e4f2 32px);
}

.form-title {
  display: flex;
  align-items: center;
  gap: 4px;
  height: 32px;
  padding-top: 3px;
}

.form-title button {
  width: 41px;
  height: 22px;
  border: 1px solid #8c9ab4;
  border-radius: 2px;
}

.form-title button svg {
  width: 16px;
  height: 16px;
}

.qt-logo {
  width: 20px;
  height: 16px;
}

.form-name {
  flex: 1;
}

.form-body {
  position: relative;
  width: 500px;
  height: 375px;
  background: #efefef;
}

.dots {
  width: 500px;
  height: 375px;
}

.lcd {
  position: absolute;
  left: 201px;
  top: 151px;
  width: 79px;
  height: 28px;
  display: flex;
  justify-content: flex-end;
  padding: 1px 9px;
  border: 1px solid #a0a0a0;
  outline: 1px solid #fff;
  outline-offset: -2px;
}

.lcd svg {
  width: 12px;
  height: 25px;
}

/* Right column */
.side {
  display: flex;
  flex-direction: column;
  gap: 5px;
  overflow: hidden;
}

table {
  width: 100%;
  table-layout: fixed;
  border-collapse: separate;
  border-spacing: 0;
}

th,
td {
  padding: 0;
  font-weight: normal;
  text-align: left;
  white-space: nowrap;
}

.object-filter {
  margin: 3px 0 7px;
}

.tree {
  height: 141px;
  border: 1px solid #828790;
  border-right: 0;
  background: #fff;
}

.tree th {
  height: 30px;
  padding-left: 5px;
}

.tree .sorted {
  position: relative;
  width: 98px;
  border-right: 1px solid #e0e0e0;
}

.sorted svg {
  position: absolute;
  left: 45px;
  top: 2px;
  width: 10px;
  height: 6px;
}

.tree td {
  padding-left: 4px;
}

.selected td {
  height: 25px;
  background: #d9d9d9;
}

.selected td:first-child {
  padding: 0;
  background: #fff;
}

.node {
  display: flex;
  align-items: center;
  gap: 7px;
  padding-left: 6px;
}

.chevron {
  width: 12px;
  height: 12px;
}

.node-name {
  flex: 1;
  display: flex;
  align-items: center;
  gap: 8px;
  height: 25px;
  padding-left: 4px;
  background: #d9d9d9;
}

.node-icon {
  width: 20px;
  height: 20px;
}

.child td {
  height: 22px;
  background: #f5f5f5;
}

.child td:first-child {
  padding-left: 54px;
}

.properties {
  flex: 1;
  min-height: 0;
}

.property-filter {
  margin: 12px 0 9px 3px;
}

.current-object {
  flex: none;
  height: 23px;
  padding: 1px 3px;
  margin-bottom: 2px;
  background: #f2f2f2;
  border-left: 1px solid #b8b8b8;
  border-bottom: 1px solid #b8b8b8;
}

.property-frame {
  flex: 1;
  min-height: 0;
  overflow: hidden;
  border-left: 1px solid #828790;
  border-bottom: 1px solid #828790;
  background: #fff;
}

.property-frame th {
  height: 31px;
  padding-left: 5px;
}

.property-frame th:first-child {
  width: 187px;
  border-right: 1px solid #e0e0e0;
}

.property-frame td {
  height: 25px;
  padding-left: 5px;
  background: #ffffdc;
  border-bottom: 1px solid #d4d4d4;
}

.property-frame td:first-child {
  padding-left: 29px;
  border-right: 1px solid #d4d4d4;
}

.property-frame tr:nth-child(odd) td {
  background: #ffffbf;
}

.more td:first-child::before {
  content: "";
  display: inline-block;
  width: 7px;
  height: 7px;
  margin: 0 16px 1px -23px;
  border: solid #a0a086;
  border-width: 2px 2px 0 0;
  transform: rotate(45deg);
}

.changed td:first-child {
  font-weight: bold;
}

.property-frame input {
  display: block;
  appearance: none;
  width: 16px;
  height: 16px;
  margin: 0;
  border: 1px solid #333;
  background: #fff;
}

.resource-tools {
  display: flex;
  align-items: center;
  gap: 9px;
  height: 43px;
  padding: 3px 0 0 6px;
}

.resource-tools svg {
  width: 28px;
  height: 28px;
}

.resource-filter {
  width: 149px;
  margin-left: auto;
}

.resource-panes {
  display: grid;
  grid-template-columns: 317px 1fr;
  gap: 7px;
  height: 121px;
}

.pane {
  border: 1px solid #828790;
  border-width: 1px 0;
  background: #fff;
}

.root-pane {
  padding: 2px 30px;
  border-width: 1px;
}

.tabs {
  display: flex;
  align-items: flex-start;
  height: 29px;
  padding: 1px 0 0 3px;
}

.tabs button {
  height: 26px;
  padding: 0 14px;
  border: 1px solid #d9d9d9;
  border-top: 0;
  border-left-width: 0;
}

.tabs button:first-child {
  padding: 0 15px 0 12px;
}

.tabs .current {
  height: 28px;
  padding: 0 15px;
  background: #fff;
}

.statusbar {
  flex: none;
  display: flex;
  justify-content: flex-end;
  height: 26px;
  padding-right: 15px;
  border-bottom: 1px solid #d4d4d4;
  color: #949494;
  font: 15px/20px "Liberation Sans", sans-serif;
}

.annotation {
  position: absolute;
  left: 143px;
  top: 772px;
  width: 384px;
  height: 90px;
  pointer-events: none;
}
```
